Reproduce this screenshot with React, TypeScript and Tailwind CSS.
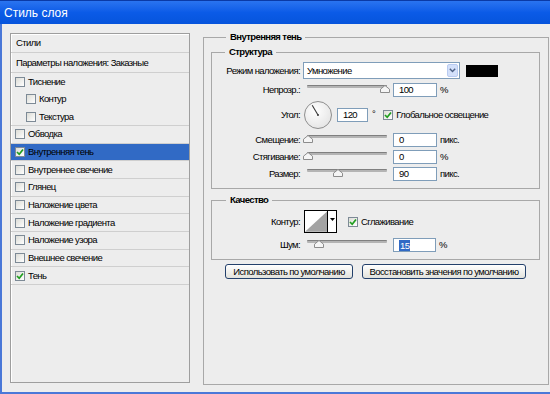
import React from 'react';

const ui = "font-['Liberation_Sans',Arial,sans-serif] text-[9.5px] tracking-[-0.6px]";

type Item = { label: string; checked?: boolean; sub?: boolean; line?: boolean; selected?: boolean };

const items: Item[] = [
  { label: 'Тиснение' },
  { label: 'Контур', sub: true },
  { label: 'Текстура', sub: true, line: true },
  { label: 'Обводка', line: true },
  { label: 'Внутренняя тень', checked: true, selected: true, line: true },
  { label: 'Внутреннее свечение', line: true },
  { label: 'Глянец', line: true },
  { label: 'Наложение цвета', line: true },
  { label: 'Наложение градиента', line: true },
  { label: 'Наложение узора', line: true },
  { label: 'Внешнее свечение', line: true },
  { label: 'Тень', checked: true, line: true },
];

function Check({ checked }: { checked?: boolean }) {
  return (
    <span className="flex h-[10px] w-[10px] shrink-0 items-center justify-center border border-[#7D8A96] bg-linear-to-br from-[#DCDCD6] to-white">
      {checked && (
        <svg width="8" height="8" viewBox="0 0 8 8">
          <path d="M1 4 L3.2 6.3 L7 1.5" fill="none" stroke="#1F9E1F" strokeWidth="1.7" />
        </svg>
      )}
    </span>
  );
}

function Field({ value, w = 'w-[44px]', selected }: { value: string; w?: string; selected?: boolean }) {
  return (
    <div className={`flex h-[14px] items-center border border-[#7F9DB9] bg-white pl-[5px] ${w}`}>
      {selected ? <span className="bg-[#316AC5] px-[1px] leading-[11px] text-white">{value}</span> : value}
    </div>
  );
}

function Slider({ pos }: { pos: number }) {
  return (
    <div className="relative h-[14px] w-[80px]">
      <div className="absolute left-0 right-0 top-[2px] h-[3px] rounded-[1px] border-t border-[#808080] bg-[#B4B4B4]" />
      <svg className="absolute top-[2px]" style={{ left: pos - 5 }} width="10" height="8" viewBox="0 0 10 8">
        <path d="M0.5 7.5 L0.5 4.2 L5 0.5 L9.5 4.2 L9.5 7.5 Z" fill="#F5F5F5" stroke="#8C8C8C" />
      </svg>
    </div>
  );
}

function Label({ children }: { children: React.ReactNode }) {
  return <div className="w-[88px] shrink-0 whitespace-nowrap text-right">{children}</div>;
}

function SliderRow({ label, pos, value, unit }: { label: string; pos: number; value: string; unit: string }) {
  return (
    <div className="flex h-[14px] items-center">
      <Label>{label}</Label>
      <div className="ml-[7px]">
        <Slider pos={pos} />
      </div>
      <div className="ml-[6px]">
        <Field value={value} />
      </div>
      <span className="ml-[3px]">{unit}</span>
    </div>
  );
}

function Dial() {
  return (
    <svg width="28" height="30" viewBox="0 0 28 30">
      <defs>
        <radialGradient id="dialfill" cx="0.4" cy="0.35" r="0.7">
          <stop offset="0" stopColor="#FFFFFF" />
          <stop offset="1" stopColor="#E4E4E4" />
        </radialGradient>
      </defs>
      <circle cx="14" cy="15" r="13.5" fill="url(#dialfill)" stroke="#8E8E8E" />
      <line x1="14" y1="15" x2="8.2" y2="5.2" stroke="#3A3A3A" strokeWidth="1.1" />
      <circle cx="14" cy="15" r="1" fill="#3A3A3A" />
    </svg>
  );
}

export default function App() {
  return (
    <div className={`flex h-[394px] w-[550px] flex-col bg-[#4A78D8] leading-[12px] text-black ${ui}`}>
      {/* title bar */}
      <div className="flex h-[24px] shrink-0 items-center border-t border-[#0A3AA6] bg-linear-to-b from-[#2A74F0] via-[#0B5BE7] to-[#0654DC] pl-[4px] text-[12px] tracking-normal text-white">
        Стиль слоя
      </div>

      <div className="ml-[2px] mb-[2px] flex flex-1 items-start bg-[#EDEDED]">
        {/* styles list */}
        <div className="ml-[8px] mt-[9px] flex h-[350px] w-[180px] flex-col border border-[#9E9E9E] shadow-[inset_1px_1px_0_#FFFFFF]">
          <div className="flex h-[19px] shrink-0 items-center border-b border-[#CFCFCF] pl-[5px]">Стили</div>
          <div className="flex h-[20px] shrink-0 items-center border-b border-[#CFCFCF] pl-[5px]">Параметры наложения: Заказные</div>
          {items.map((it) => (
            <div
              key={it.label}
              className={`flex h-[17.67px] shrink-0 items-center gap-[3px] ${it.sub ? 'pl-[15px]' : 'pl-[4px]'} ${
                it.line ? 'border-b border-[#CFCFCF]' : ''
              } ${it.selected ? 'bg-[#316AC5]' : ''}`}
            >
              <Check checked={it.checked} />
              <span>{it.label}</span>
            </div>
          ))}
        </div>

        {/* settings */}
        <fieldset className="ml-[13px] mt-[7px] h-[354px] w-[346px] border border-[#A8A8A8] pl-[7px] pr-[8px]">
          <legend className="ml-[15px] px-[4px] font-bold leading-[12px]">Внутренняя тень</legend>

          <fieldset className="mt-[3px] flex flex-col border border-[#A8A8A8] pt-[4px] pb-[7px]">
            <legend className="ml-[13px] px-[4px] font-bold leading-[12px]">Структура</legend>

            <div className="flex h-[17px] items-center">
              <Label>Режим наложения:</Label>
              <div className="ml-[3px] flex h-[17px] w-[157px] items-stretch border border-[#7F9DB9] bg-white">
                <span className="flex flex-1 items-center pl-[3px]">Умножение</span>
                <span className="m-[1px] flex w-[11px] items-center justify-center rounded-[2px] border border-[#B9CBF1] bg-[#D3E0FA]">
                  <svg width="7" height="5" viewBox="0 0 7 5">
                    <path d="M0.8 0.8 L3.5 3.6 L6.2 0.8" fill="none" stroke="#4D6185" strokeWidth="1.4" />
                  </svg>
                </span>
              </div>
              <div className="ml-[6px] h-[12px] w-[32px] bg-black" />
            </div>

            <div className="mt-[4px] flex h-[14px] items-center">
              <Label>Непрозр.:</Label>
              <div className="ml-[7px]">
                <Slider pos={78} />
              </div>
              <div className="ml-[6px]">
                <Field value="100" />
              </div>
              <span className="ml-[3px]">%</span>
            </div>

            <div className="mt-[3px] flex h-[30px] items-center">
              <Label>Угол:</Label>
              <div className="ml-[4px]">
                <Dial />
              </div>
              <div className="ml-[5px]">
                <Field value="120" w="w-[31px]" />
              </div>
              <span className="ml-[4px] self-start pt-[8px]">°</span>
              <div className="ml-[8px]">
                <Check checked />
              </div>
              <span className="ml-[3px]">Глобальное освещение</span>
            </div>

            <div className="mt-[3px] flex flex-col gap-[3px]">
              <SliderRow label="Смещение:" pos={1} value="0" unit="пикс." />
              <SliderRow label="Стягивание:" pos={1} value="0" unit="%" />
              <SliderRow label="Размер:" pos={31} value="90" unit="пикс." />
            </div>
          </fieldset>

          <fieldset className="mt-[5px] flex flex-col border border-[#A8A8A8] pt-[4px] pb-[7px]">
            <legend className="ml-[14px] px-[4px] font-bold leading-[12px]">Качество</legend>

            <div className="flex h-[23px] items-center">
              <Label>Контур:</Label>
              <div className="ml-[4px] flex h-[23px] w-[33px] border border-black bg-white">
                <svg width="23" height="21" viewBox="0 0 23 21">
                  <polygon points="0,21 23,0 23,21" fill="#A3A3A3" />
                </svg>
                <span className="flex w-[9px] justify-center border-l border-black pt-[7px]">
                  <svg width="5" height="3" viewBox="0 0 5 3">
                    <polygon points="0,0 5,0 2.5,3" fill="#000" />
                  </svg>
                </span>
              </div>
              <div className="ml-[11px]">
                <Check checked />
              </div>
              <span className="ml-[3px]">Сглаживание</span>
            </div>

            <div className="mt-[5px] flex h-[14px] items-center">
              <Label>Шум:</Label>
              <div className="ml-[7px]">
                <Slider pos={12} />
              </div>
              <div className="ml-[6px]">
                <Field value="15" w="w-[43px]" selected />
              </div>
              <span className="ml-[3px]">%</span>
            </div>
          </fieldset>

          <div className="mt-[4px] flex justify-center gap-[9px]">
            <button className="h-[15px] w-[128px] whitespace-nowrap rounded-[3px] border border-[#23406B] bg-linear-to-b from-white to-[#E2E2DC] leading-[12px]">
              Использовать по умолчанию
            </button>
            <button className="h-[15px] w-[164px] whitespace-nowrap rounded-[3px] border border-[#23406B] bg-linear-to-b from-white to-[#E2E2DC] leading-[12px]">
              Восстановить значения по умолчанию
            </button>
          </div>
        </fieldset>
      </div>
    </div>
  );
}
